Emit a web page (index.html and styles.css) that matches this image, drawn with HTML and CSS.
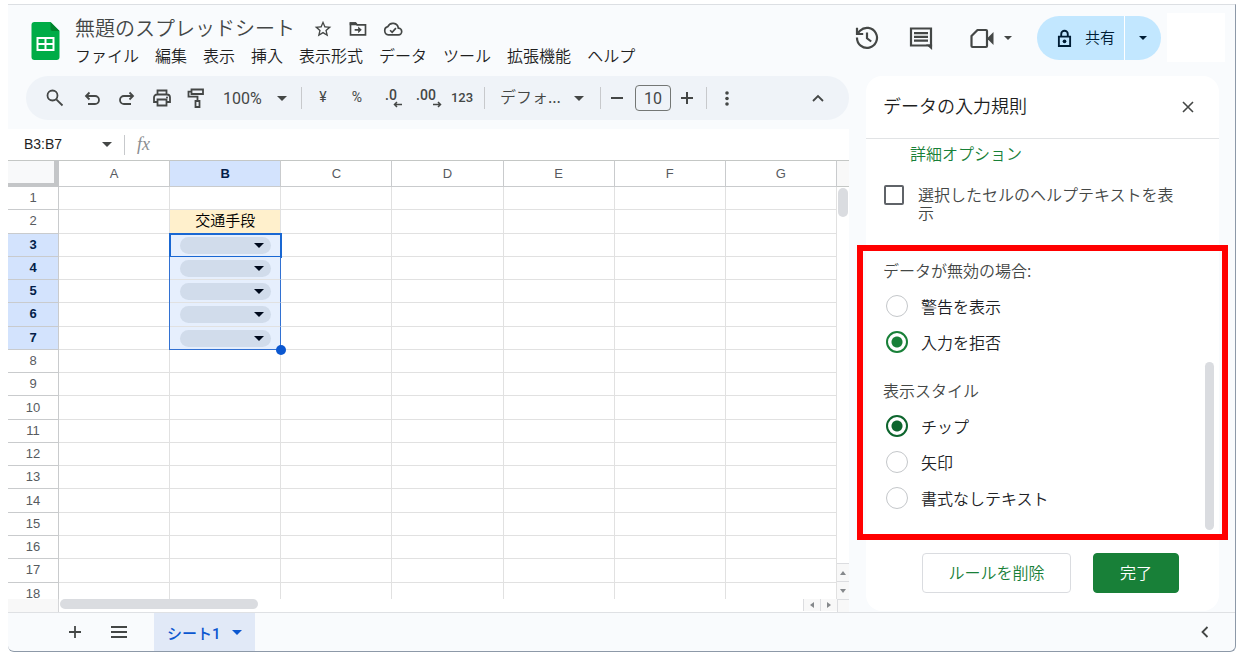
FILE: index.html
```html
<!DOCTYPE html>
<html lang="ja">
<head>
<meta charset="utf-8">
<meta name="viewport" content="width=device-width, initial-scale=1">
<title>無題のスプレッドシート</title>
<link rel="stylesheet" href="styles.css">
</head>
<body>
<div class="app">
  <header class="header">
    <svg class="logo" viewBox="0 0 28 38" aria-hidden="true">
      <path fill="#00ac47" d="M3 0h16l9 9v26a3 3 0 0 1-3 3H3a3 3 0 0 1-3-3V3a3 3 0 0 1 3-3z"/>
      <path fill="#00832d" d="M19 0l9 9h-7a2 2 0 0 1-2-2z"/>
      <path fill="#fff" fill-rule="evenodd" d="M5 15h18v14H5zM7 17v4h6v-4zM15 17v4h6v-4zM7 23v4h6v-4zM15 23v4h6v-4z"/>
    </svg>
    <div class="doc">
      <div class="title-row">
        <h1 class="title">無題のスプレッドシート</h1>
        <button class="icon-btn" aria-label="スター"><svg class="icon-20" viewBox="0 0 24 24"><path fill="currentColor" d="M22 9.24l-7.19-.62L12 2 9.19 8.63 2 9.24l5.46 4.73L5.82 21 12 17.27 18.18 21l-1.63-7.03L22 9.24zM12 15.4l-3.76 2.27 1-4.28-3.32-2.88 4.38-.38L12 6.1l1.71 4.04 4.38.38-3.32 2.88 1 4.28L12 15.4z"/></svg></button>
        <button class="icon-btn" aria-label="移動"><svg class="icon-20" viewBox="0 0 24 24"><path fill="none" stroke="currentColor" stroke-width="2" d="M3 5h6l2 2h10v12H3z"/><path fill="currentColor" d="M2 4h7.5l2.500 3.500H2zM8 12h4.200V9l4.300 4-4.300 4v-3H8z"/></svg></button>
        <button class="icon-btn" aria-label="保存状態"><svg class="icon-20" viewBox="0 0 24 24"><path fill="none" stroke="currentColor" stroke-width="2" d="M6.500 19a5 5 0 0 1-.7-9.800A6.600 6.600 0 0 1 18.400 11a4 4 0 0 1 .1 8zM8.500 13.500l2.500 2.500 4.500-5"/></svg></button>
      </div>
      <nav class="menu">
        <button>ファイル</button><button>編集</button><button>表示</button><button>挿入</button><button>表示形式</button><button>データ</button><button>ツール</button><button>拡張機能</button><button>ヘルプ</button>
      </nav>
    </div>
    <div class="actions">
      <button class="action" aria-label="変更履歴"><svg class="icon-24" viewBox="0 0 24 24"><path fill="none" stroke="currentColor" stroke-width="2.200" d="M2 11.500a10 10 0 1 0 3-6.800L2.500 7.500M2 1.800v6.200h6.200M12 6.500v5.800l4.200 3.200"/></svg></button>
      <button class="action" aria-label="コメント"><svg class="icon-24" viewBox="0 0 24 24"><path fill="none" stroke="currentColor" stroke-width="2.200" d="M2 2.500h20v17H2z"/><path fill="currentColor" d="M17 18.500h6.100V24zM5 6h14v2.200H5zM5 9.800h14V12H5zM5 13.600h14v2.200H5z"/></svg></button>
      <button class="action video" aria-label="通話"><svg class="icon-24" viewBox="0 0 24 24"><path fill="none" stroke="currentColor" stroke-width="2.200" stroke-linejoin="round" d="M7.500 4H16a1 1 0 0 1 1 1v15a1 1 0 0 1-1 1H2.500a1 1 0 0 1-1-1V10z"/><path fill="currentColor" d="M18 11.500l5.500-5.500v13L18 13.500z"/></svg><i class="caret"></i></button>
      <div class="share">
        <button class="share-main"><svg class="lock" viewBox="0 0 16 20"><path fill="none" stroke="currentColor" stroke-width="2" d="M2 8h12v10H2zM4.500 8V5.200a3.500 3.500 0 0 1 7 0V8"/><circle cx="8" cy="13" r="2" fill="currentColor"/></svg><span>共有</span></button>
        <button class="share-more" aria-label="共有オプション"><i class="caret"></i></button>
      </div>
      <div class="account"></div>
    </div>
  </header>

  <div class="workspace">
    <main class="main">
      <div class="toolbar">
        <button class="tool w38" aria-label="検索"><svg class="icon-20" viewBox="0 0 20 20"><g fill="none" stroke="currentColor" stroke-width="1.800"><circle cx="7.500" cy="7.500" r="5"/><path d="M11.300 11.300l6.200 6.200"/></g></svg></button>
        <button class="tool w36" aria-label="元に戻す"><svg class="icon-20" viewBox="0 0 20 20"><path fill="none" stroke="currentColor" stroke-width="1.800" d="M7.500 4.500L4 8l3.500 3.500M4 8h9a3.500 3.500 0 0 1 0 8H6"/></svg></button>
        <button class="tool w34" aria-label="やり直し"><svg class="icon-20" viewBox="0 0 20 20"><path fill="none" stroke="currentColor" stroke-width="1.800" d="M12.500 4.500L16 8l-3.500 3.500M16 8H7a3.500 3.500 0 0 0 0 8h7"/></svg></button>
        <button class="tool w36" aria-label="印刷"><svg class="icon-20" viewBox="0 0 20 20"><path fill="none" stroke="currentColor" stroke-width="1.800" d="M5.500 6.500v-4h9v4M5.500 14H2V9.500a3 3 0 0 1 3-3h10a3 3 0 0 1 3 3V14h-3.500M5.500 11.500h9v6h-9z"/><circle cx="15" cy="9.500" r="1" fill="currentColor"/></svg></button>
        <button class="tool w32" aria-label="書式を貼り付け"><svg class="icon-20" viewBox="0 0 20 20"><path fill="none" stroke="currentColor" stroke-width="1.800" d="M5.500 1.500h11.500v4.500H5.500zM5.500 3.700H2.500v5h9v4.300M9.500 13h4v6h-4z"/></svg></button>
        <label class="picker zoom"><select aria-label="ズーム"><option>100%</option></select><i class="caret"></i></label>
        <i class="sep"></i>
        <button class="tool w30 yen">¥</button>
        <button class="tool w38 pct">%</button>
        <button class="tool w30 dec" aria-label="小数点以下を減らす"><span>.0</span><svg viewBox="0 0 9 7"><path fill="none" stroke="currentColor" stroke-width="1.500" d="M4 1L1.500 3.500 4 6M1.500 3.500H9"/></svg></button>
        <button class="tool w40 dec" aria-label="小数点以下を増やす"><span>.00</span><svg viewBox="0 0 9 7"><path fill="none" stroke="currentColor" stroke-width="1.500" d="M5 1l2.500 2.500L5 6M7.500 3.500H0"/></svg></button>
        <button class="tool w32 num">123</button>
        <i class="sep"></i>
        <label class="picker font"><select aria-label="フォント"><option>デフォ...</option></select><i class="caret"></i></label>
        <i class="sep"></i>
        <button class="tool w20" aria-label="縮小"><svg class="icon-12" viewBox="0 0 12 12"><path stroke="currentColor" stroke-width="2" d="M0 6h12"/></svg></button>
        <input class="size" aria-label="フォントサイズ" value="10">
        <button class="tool w26" aria-label="拡大"><svg class="icon-12" viewBox="0 0 12 12"><path stroke="currentColor" stroke-width="2" d="M0 6h12M6 0v12"/></svg></button>
        <i class="sep"></i>
        <button class="tool w28" aria-label="その他"><svg class="icon-20" viewBox="0 0 20 20"><g fill="currentColor"><circle cx="10" cy="5" r="1.800"/><circle cx="10" cy="10.500" r="1.800"/><circle cx="10" cy="16" r="1.800"/></g></svg></button>
        <button class="tool w30 fold" aria-label="メニューを非表示"><svg class="icon-12" viewBox="0 0 12 12"><path fill="none" stroke="currentColor" stroke-width="1.800" d="M1 9l5-5 5 5"/></svg></button>
      </div>

      <div class="formula">
        <input class="namebox" aria-label="名前ボックス" value="B3:B7">
        <i class="caret"></i>
        <i class="formula-sep"></i>
        <span class="fx">fx</span>
      </div>

      <div class="sheet">
        <div class="grid-clip">
          <table class="grid">
            <thead><tr><th class="corner"></th><th>A</th><th class="on">B</th><th>C</th><th>D</th><th>E</th><th>F</th><th>G</th></tr></thead>
            <tbody>
              <tr><th>1</th><td></td><td></td><td></td><td></td><td></td><td></td><td></td></tr>
              <tr><th>2</th><td></td><td class="label">交通手段</td><td></td><td></td><td></td><td></td><td></td></tr>
              <tr><th class="on">3</th><td></td><td class="sel active"><button class="chip" aria-label="B3"><i class="caret"></i></button></td><td></td><td></td><td></td><td></td><td></td></tr>
              <tr><th class="on">4</th><td></td><td class="sel"><button class="chip" aria-label="B4"><i class="caret"></i></button></td><td></td><td></td><td></td><td></td><td></td></tr>
              <tr><th class="on">5</th><td></td><td class="sel"><button class="chip" aria-label="B5"><i class="caret"></i></button></td><td></td><td></td><td></td><td></td><td></td></tr>
              <tr><th class="on">6</th><td></td><td class="sel"><button class="chip" aria-label="B6"><i class="caret"></i></button></td><td></td><td></td><td></td><td></td><td></td></tr>
              <tr><th class="on">7</th><td></td><td class="sel last"><button class="chip" aria-label="B7"><i class="caret"></i></button><i class="handle"></i></td><td></td><td></td><td></td><td></td><td></td></tr>
              <tr><th>8</th><td></td><td></td><td></td><td></td><td></td><td></td><td></td></tr>
              <tr><th>9</th><td></td><td></td><td></td><td></td><td></td><td></td><td></td></tr>
              <tr><th>10</th><td></td><td></td><td></td><td></td><td></td><td></td><td></td></tr>
              <tr><th>11</th><td></td><td></td><td></td><td></td><td></td><td></td><td></td></tr>
              <tr><th>12</th><td></td><td></td><td></td><td></td><td></td><td></td><td></td></tr>
              <tr><th>13</th><td></td><td></td><td></td><td></td><td></td><td></td><td></td></tr>
              <tr><th>14</th><td></td><td></td><td></td><td></td><td></td><td></td><td></td></tr>
              <tr><th>15</th><td></td><td></td><td></td><td></td><td></td><td></td><td></td></tr>
              <tr><th>16</th><td></td><td></td><td></td><td></td><td></td><td></td><td></td></tr>
              <tr><th>17</th><td></td><td></td><td></td><td></td><td></td><td></td><td></td></tr>
              <tr><th>18</th><td></td><td></td><td></td><td></td><td></td><td></td><td></td></tr>
            </tbody>
          </table>
        </div>
        <div class="vbar">
          <div class="vbar-head"></div>
          <div class="vthumb"></div>
          <button class="step v first" aria-label="上へ"><i class="tri up"></i></button>
          <button class="step v" aria-label="下へ"><i class="tri down"></i></button>
        </div>
        <div class="hbar">
          <div class="hbar-head"></div>
          <div class="hthumb"></div>
          <button class="step h first" aria-label="左へ"><i class="tri left"></i></button>
          <button class="step h" aria-label="右へ"><i class="tri right"></i></button>
        </div>
        <div class="bar-corner"></div>
      </div>
    </main>

    <aside class="panel">
      <div class="panel-head">
        <h2>データの入力規則</h2>
        <button class="close" aria-label="閉じる"><svg class="icon-12" viewBox="0 0 12 12"><path stroke="currentColor" stroke-width="1.600" d="M1 1l10 10M11 1L1 11"/></svg></button>
      </div>
      <div class="options">
        <a class="advanced" href="#">詳細オプション</a>
        <label class="check"><input type="checkbox"><span>選択したセルのヘルプテキストを表示</span></label>
      </div>
      <div class="rules">
        <h3 id="invalid">データが無効の場合:</h3>
        <div role="radiogroup" aria-labelledby="invalid">
          <label class="radio"><input type="radio" name="invalid">警告を表示</label>
          <label class="radio"><input type="radio" name="invalid" checked>入力を拒否</label>
        </div>
        <h3 id="style" class="second">表示スタイル</h3>
        <div role="radiogroup" aria-labelledby="style">
          <label class="radio dark"><input type="radio" name="style" checked>チップ</label>
          <label class="radio"><input type="radio" name="style">矢印</label>
          <label class="radio"><input type="radio" name="style">書式なしテキスト</label>
        </div>
        <i class="panel-thumb"></i>
        <i class="highlight"></i>
      </div>
      <div class="buttons">
        <button class="btn">ルールを削除</button>
        <button class="btn primary">完了</button>
      </div>
    </aside>
  </div>

  <footer class="footer">
    <button class="foot-btn" aria-label="シートを追加"><svg class="icon-12" viewBox="0 0 12 12"><path stroke="currentColor" stroke-width="1.800" d="M0 6h12M6 0v12"/></svg></button>
    <button class="foot-btn" aria-label="すべてのシート"><svg class="list" viewBox="0 0 16 12"><path stroke="currentColor" stroke-width="1.800" d="M0 1h16M0 6h16M0 11h16"/></svg></button>
    <button class="tab">シート1<i class="caret"></i></button>
    <button class="foot-btn expand" aria-label="サイドパネルを表示"><svg class="icon-12" viewBox="0 0 12 12"><path fill="none" stroke="currentColor" stroke-width="1.800" d="M8.500 1l-5 5 5 5"/></svg></button>
  </footer>
</div>
</body>
</html>
```
FILE: styles.css
```css
* { box-sizing: border-box; }

body {
  margin: 0;
  padding: 4px 8px 6px;
  background: #fff;
  color: #444746;
  font-family: "Noto Sans CJK JP", sans-serif;
  font-size: 16px;
  font-weight: 350;
}

h1, h2, h3 { margin: 0; font-weight: inherit; }
svg { display: block; flex: none; }

button, select, input {
  margin: 0;
  padding: 0;
  border: 0;
  background: none;
  color: inherit;
  font: inherit;
}

select { appearance: none; }

.app {
  display: flex;
  flex-direction: column;
  height: calc(100vh - 10px);
  background: #f9fbfd;
  border: 1px solid #8d99a8;
  border-top-color: #dcdfe3;
  border-left: 0;
  border-radius: 0 0 6px 6px;
  overflow: hidden;
}

.icon-12 { width: 12px; height: 12px; }
.icon-20 { width: 20px; height: 20px; }
.icon-24 { width: 24px; height: 24px; }

.caret {
  flex: none;
  border: 5px solid transparent;
  border-top-color: currentColor;
  border-bottom: 0;
}

/* Header */
.header {
  display: flex;
  flex: none;
  height: 71px;
  padding: 0 10px 0 23px;
}

.logo { width: 29px; height: 38px; margin-top: 17px; }
.doc { margin: 10px 0 0 15px; }
.title-row { display: flex; align-items: center; height: 27px; }
.title { margin-right: 18px; padding-bottom: 2px; font-size: 20px; line-height: 26px; white-space: nowrap; }
.icon-btn { margin-right: 15px; }
.menu { display: flex; gap: 16px; color: #1f1f1f; }
.menu button { line-height: 26px; white-space: nowrap; }

.actions { display: flex; align-items: flex-start; margin-left: auto; }
.action { display: flex; align-items: center; justify-content: center; width: 54px; height: 66px; }
.action.video { width: 73px; gap: 10px; margin-right: 16px; padding-left: 12px; }
.action .caret, .share .caret { border-width: 4px 4px 0; }

.share { display: flex; height: 44px; margin: 11px 6px 0 0; border-radius: 22px; background: #c2e7ff; color: #001d35; overflow: hidden; }
.share-main { display: flex; align-items: center; gap: 13px; width: 87px; padding-left: 20px; font-size: 15px; }
.share-main span { padding-bottom: 4px; }
.share-more { display: flex; align-items: center; justify-content: center; width: 37px; border-left: 1px solid #fff; }
.lock { width: 15px; height: 19px; }
.account { width: 58px; height: 49px; margin-top: 8px; background: #fff; }

/* Workspace */
.workspace { display: flex; flex: 1; min-height: 0; gap: 17px; padding-right: 16px; }
.main { display: flex; flex-direction: column; flex: 1; min-width: 0; }

.toolbar {
  display: flex;
  flex: none;
  align-items: center;
  height: 44px;
  margin: 0 0 9px 18px;
  padding: 0 16px 0 10px;
  border-radius: 22px;
  background: #eff3f8;
}

.tool { display: flex; flex: none; align-items: center; justify-content: center; height: 30px; font-family: Roboto, sans-serif; }
.w20 { width: 20px; }
.w26 { width: 26px; }
.w28 { width: 28px; }
.w30 { width: 30px; }
.w32 { width: 32px; }
.w34 { width: 34px; }
.w36 { width: 36px; }
.w38 { width: 38px; }
.w40 { width: 40px; }
.yen, .pct, .num { padding-bottom: 2px; font-size: 14px; font-weight: 400; }
.num { font-size: 13px; font-weight: 500; }
.dec { flex-direction: column; align-items: center; font-size: 14px; font-weight: 500; line-height: 12px; }
.dec svg { width: 9px; height: 7px; align-self: flex-end; margin-right: 4px; }
.sep { flex: none; width: 1px; height: 22px; margin: 0 6px; background: #c7c9cc; }
.picker { display: flex; flex: none; align-items: center; justify-content: space-between; }
.picker select { flex: 1; min-width: 0; }
.zoom { width: 83px; padding: 0 8px 0 11px; font-family: Roboto, sans-serif; font-weight: 400; }
.font { width: 103px; padding: 0 10px 0 9px; }
.font select { padding-bottom: 4px; }
.size { width: 36px; height: 26px; margin: 0 3px 0 8px; border: 1px solid #747775; border-radius: 4px; font-family: Roboto, sans-serif; font-weight: 400; text-align: center; }
.fold { margin-left: auto; }

.formula {
  display: flex;
  flex: none;
  align-items: center;
  height: 31px;
  padding-left: 16px;
  background: #fff;
}

.namebox { width: 78px; padding-bottom: 2px; color: #1f1f1f; font: 14px "Liberation Sans", sans-serif; }
.formula-sep { width: 1px; height: 20px; margin: 0 12px; background: #c7c9cc; }
.fx { color: #8a8d91; font: italic 18px "Liberation Serif", serif; }

/* Grid */
.sheet { display: grid; grid-template-columns: minmax(0, 1fr) 12px; grid-template-rows: minmax(0, 1fr) 13px; flex: 1; min-height: 0; background: #fff; }
.grid-clip { overflow: hidden; }

.grid {
  width: 100%;
  height: 446px;
  table-layout: fixed;
  border-collapse: separate;
  border-spacing: 0;
  font-family: "Liberation Sans", "Noto Sans CJK JP", sans-serif;
  font-size: 13px;
  line-height: 18px;
}

.grid th, .grid td { height: 23px; padding: 0; border: 0 solid #e1e1e1; border-width: 0 1px 1px 0; }
.grid th { border-color: #c9cbcd; color: #575b5f; font-weight: 400; text-align: center; }
.grid thead th { height: 27px; border-top: 1px solid #c4c7c5; }
.grid .corner { width: 51px; border-right: 5px solid #c4c6c8; border-bottom: 4px solid #c4c6c8; background: #f8f9fa; }
.grid th.on { background: #d3e3fd; color: #041e49; font-weight: 700; }
.grid .label { background: #fff0cc; color: #000; font-size: 15px; text-align: center; }
.grid .sel { position: relative; background: #e6effd; border-right-color: #3271d2; box-shadow: -1px 0 #3271d2; }
.grid .active { outline: 2px solid #1967d2; outline-offset: -1px; }
.grid .last { border-bottom-color: #3271d2; }
.chip { display: flex; align-items: center; justify-content: flex-end; width: calc(100% - 19px); height: 17px; margin: 1px auto 0; padding-right: 7px; border-radius: 9px; background: #d1dceb; color: #000a1c; }
.handle { position: absolute; right: -6px; bottom: -6px; width: 10px; height: 10px; border-radius: 50%; background: #0b57d0; }

.vbar { display: flex; flex-direction: column; align-items: center; }
.vbar-head { width: 100%; height: 27px; border: solid #c4c7c5; border-width: 1px 0; background: #f8f8f8; }
.vthumb { width: 10px; height: 29px; margin-top: 1px; border-radius: 5px; background: #dadce0; }
.hbar { display: flex; align-items: flex-start; }
.hbar-head { width: 51px; height: 100%; border-right: 1px solid #d5d6d8; background: #f8f8f8; }
.hthumb { width: 198px; height: 10px; margin-left: 1px; border-radius: 5px; background: #dadce0; }
.step { display: flex; align-items: center; justify-content: center; background: #f8f8f8; border: 0 solid #dcdde0; }
.step.v { width: 12px; height: 18px; border-top-width: 1px; }
.step.h { width: 17px; height: 12px; border-left-width: 1px; }
.step.v.first { margin-top: auto; }
.step.h.first { margin-left: auto; }
.bar-corner { border: solid #dcdde0; border-width: 1px 0 0 1px; background: #f8f8f8; }
.tri { border: 3px solid transparent; }
.up { border-bottom: 4px solid #85888b; border-top: 0; }
.down { border-top: 4px solid #85888b; border-bottom: 0; }
.left { border-right: 4px solid #85888b; border-left: 0; }
.right { border-left: 4px solid #85888b; border-right: 0; }

/* Side panel */
.panel { flex: none; width: 353px; margin-bottom: 1px; border-radius: 16px; background: #fff; }
.panel-head { display: flex; align-items: center; justify-content: space-between; height: 63px; padding: 0 25px 0 17px; border-bottom: 1px solid #e1e3e5; color: #1f1f1f; }
.panel-head h2 { padding-bottom: 4px; font-size: 18px; }
.close { color: #444746; }
.options { display: flex; flex-direction: column; align-items: flex-start; gap: 22px; padding: 4px 34px 30px 18px; }
.advanced { margin-left: 26px; color: #188038; line-height: 20px; text-decoration: none; }
.check { display: flex; gap: 14px; line-height: 18px; }
.check input { flex: none; width: 20px; height: 20px; appearance: none; border: 2px solid #5f6368; border-radius: 2px; }

.rules { position: relative; padding: 7px 17px 18px; }
.rules h3 { margin-bottom: 6px; font-size: 16px; line-height: 24px; }
.rules .second { margin-top: 18px; }
.radio { display: flex; align-items: center; gap: 13px; height: 36px; padding-left: 3px; color: #202124; }
.radio input { width: 22px; height: 22px; appearance: none; border: 1px solid #c4c7ca; border-radius: 50%; }
.radio input:checked { border: 2px solid #188038; background: radial-gradient(circle, #188038 5px, #fff 6px); }
.radio.dark input:checked { border-color: #0d652d; background: radial-gradient(circle, #0d652d 5px, #fff 6px); }
.panel-thumb { position: absolute; right: 5px; bottom: 4px; width: 9px; height: 168px; border-radius: 5px; background: #dadce0; }
.highlight { position: absolute; inset: -6px -9px; border: 6px solid #f00; pointer-events: none; }

.buttons { display: flex; justify-content: flex-end; gap: 22px; padding: 19px 40px 0 0; }
.btn { width: 149px; height: 40px; padding-bottom: 3px; border: 1px solid #dadce0; border-radius: 4px; color: #188038; }
.btn.primary { width: 86px; border-color: #188038; background: #188038; color: #fff; }

/* Footer */
.footer { display: flex; flex: none; align-items: stretch; height: 39px; padding: 0 15px 0 45px; border-top: 1px solid #dfe1e4; }
.foot-btn { display: flex; align-items: center; justify-content: center; width: 44px; }
.list { width: 16px; height: 12px; }
.tab { display: flex; align-items: center; gap: 11px; margin-left: 13px; padding: 0 13px; background: #e1e9f7; color: #0b57d0; font-size: 15px; font-weight: 500; font-family: Roboto, "Noto Sans CJK JP", sans-serif; }
.expand { width: 30px; margin-left: auto; }
```
